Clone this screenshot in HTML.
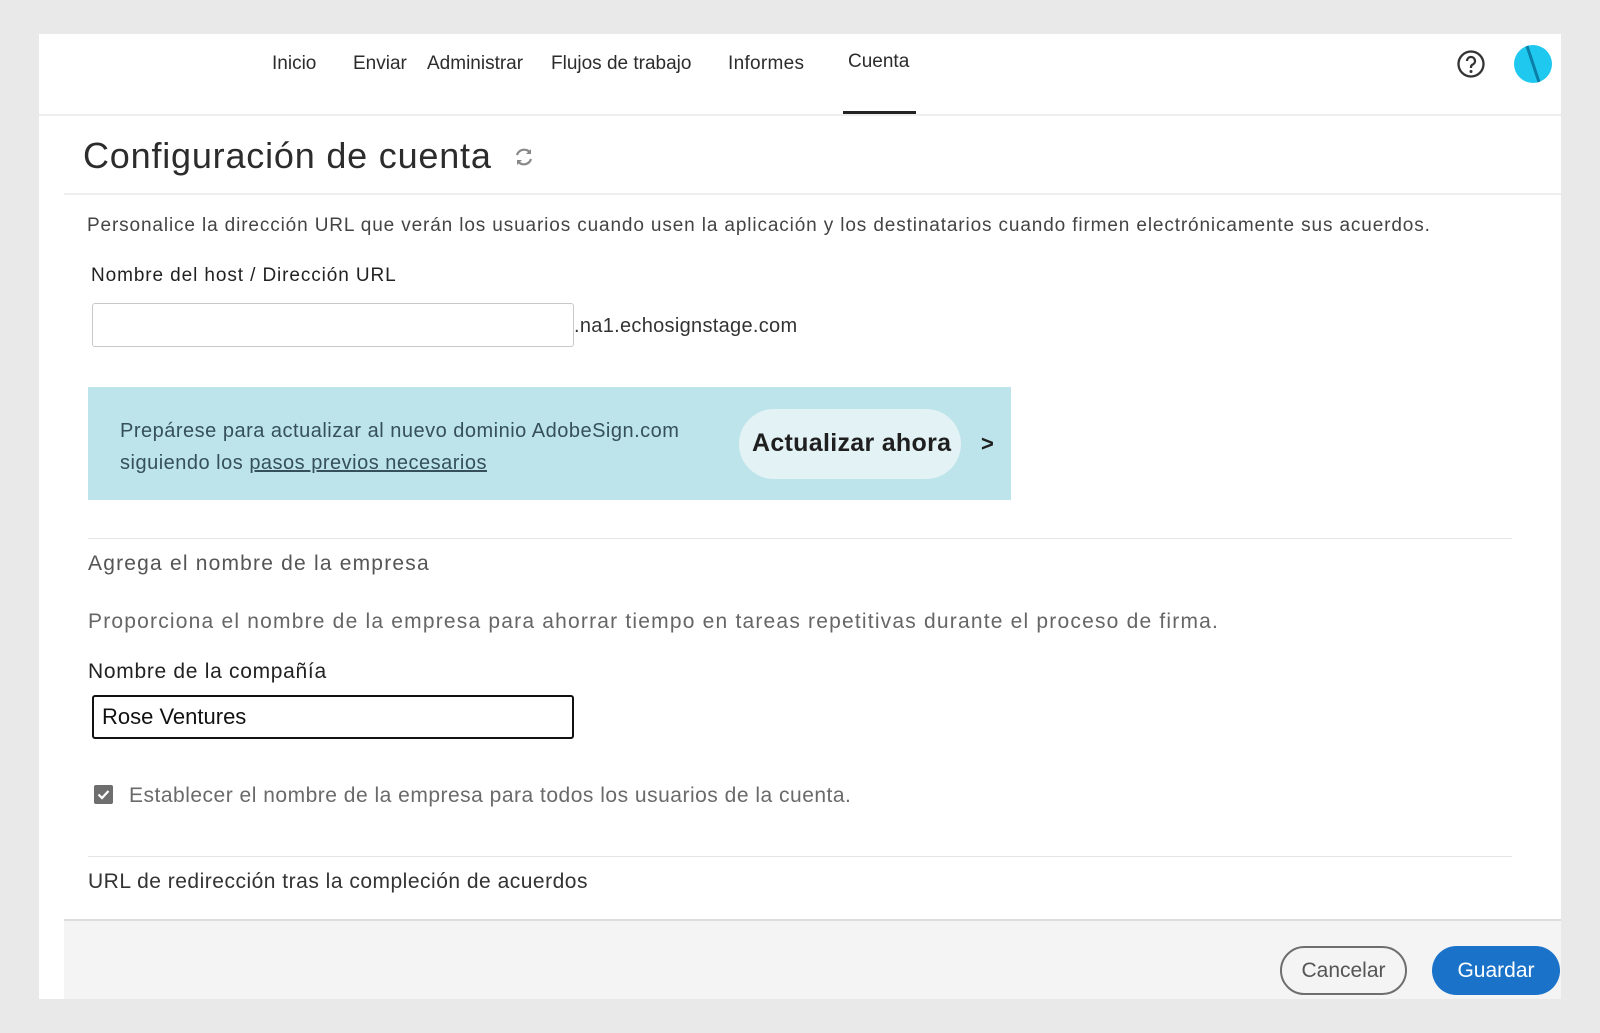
<!DOCTYPE html>
<html><head><meta charset="utf-8"><style>
*{margin:0;padding:0;box-sizing:border-box}
body{width:1600px;height:1033px;background:#e9e9e9;font-family:"Liberation Sans",sans-serif;position:relative;overflow:hidden}
.a{position:absolute;white-space:nowrap}
.card{position:absolute;left:39px;top:34px;width:1522px;height:965px;background:#fff}
.nav{font-size:19px;color:#2c2c2c;top:53px}
</style></head><body>
<div class="card"></div>
<div class="a nav" style="left:272px">Inicio</div>
<div class="a nav" style="left:353px">Enviar</div>
<div class="a nav" style="left:427px">Administrar</div>
<div class="a nav" style="left:551px">Flujos de trabajo</div>
<div class="a nav" style="left:728px;letter-spacing:0.3px">Informes</div>
<div class="a nav" style="left:848px;top:51px">Cuenta</div>
<div class="a" style="left:843px;top:111px;width:73px;height:3px;background:#222"></div>
<div class="a" style="left:39px;top:114px;width:1522px;height:2px;background:#eee"></div>
<svg class="a" style="left:1456px;top:49px" width="30" height="30" viewBox="0 0 30 30"><circle cx="15" cy="15" r="12.5" fill="none" stroke="#333" stroke-width="2.3"/><path d="M11 12a4 4 0 1 1 5.5 3.7c-1 .5-1.5 1.2-1.5 2.3v1" fill="none" stroke="#333" stroke-width="2.3"/><circle cx="15" cy="22.5" r="1.5" fill="#333"/></svg>
<svg class="a" style="left:1513px;top:44px" width="40" height="40" viewBox="0 0 40 40"><circle cx="20" cy="20" r="19" fill="#1ec8ef"/><path d="M14 2 L26 38" stroke="#0b7fa8" stroke-width="3"/></svg>
<div class="a" style="left:83px;top:135px;font-size:36px;color:#2c2c2c;letter-spacing:0.8px">Configuración de cuenta</div>
<svg class="a" style="left:512px;top:145px" width="24" height="24" viewBox="0 0 24 24"><path d="M5 10a7.5 7.5 0 0 1 13-2.5M19 14a7.5 7.5 0 0 1-13 2.5" fill="none" stroke="#888" stroke-width="2.2"/><path d="M19 4v5h-5z M5 20v-5h5z" fill="#888"/></svg>
<div class="a" style="left:64px;top:193px;width:1497px;height:2px;background:#eee"></div>
<div class="a" style="left:87px;top:215px;font-size:19px;color:#444;letter-spacing:0.87px">Personalice la dirección URL que verán los usuarios cuando usen la aplicación y los destinatarios cuando firmen electrónicamente sus acuerdos.</div>
<div class="a" style="left:91px;top:265px;font-size:19px;color:#222;letter-spacing:0.9px">Nombre del host / Dirección URL</div>
<div class="a" style="left:92px;top:303px;width:482px;height:44px;border:1px solid #c8c8c8;border-radius:3px"></div>
<div class="a" style="left:574px;top:315px;font-size:20px;color:#333;letter-spacing:0.3px">.na1.echosignstage.com</div>
<div class="a" style="left:88px;top:387px;width:923px;height:113px;background:#bde3eb"></div>
<div class="a" style="left:120px;top:415px;font-size:20px;color:#35505a;line-height:32px;letter-spacing:0.5px">Prepárese para actualizar al nuevo dominio AdobeSign.com<br>siguiendo los <u>pasos previos necesarios</u></div>
<div class="a" style="left:739px;top:409px;width:222px;height:70px;border-radius:35px;background:#e3f2f5"></div>
<div class="a" style="left:752px;top:429px;font-size:25px;font-weight:bold;color:#1f1f1f;letter-spacing:0.3px">Actualizar ahora</div>
<div class="a" style="left:981px;top:431px;font-size:22px;font-weight:bold;color:#1f1f1f">&gt;</div>
<div class="a" style="left:88px;top:538px;width:1424px;height:1px;background:#e6e6e6"></div>
<div class="a" style="left:88px;top:552px;font-size:21px;color:#555;letter-spacing:1.2px">Agrega el nombre de la empresa</div>
<div class="a" style="left:88px;top:610px;font-size:21px;color:#666;letter-spacing:1.2px">Proporciona el nombre de la empresa para ahorrar tiempo en tareas repetitivas durante el proceso de firma.</div>
<div class="a" style="left:88px;top:660px;font-size:21px;color:#222;letter-spacing:0.7px">Nombre de la compañía</div>
<div class="a" style="left:92px;top:695px;width:482px;height:44px;border:2px solid #111;border-radius:3px;font-size:22px;color:#111;padding:7px 0 0 8px">Rose Ventures</div>
<svg class="a" style="left:94px;top:785px" width="19" height="19" viewBox="0 0 19 19"><rect width="19" height="19" rx="2" fill="#6e6e6e"/><path d="M4.5 9.5l3.5 3.5 6.5-7" fill="none" stroke="#fff" stroke-width="2.2"/></svg>
<div class="a" style="left:129px;top:784px;font-size:21px;color:#6a6a6a;letter-spacing:0.5px">Establecer el nombre de la empresa para todos los usuarios de la cuenta.</div>
<div class="a" style="left:88px;top:856px;width:1424px;height:1px;background:#e6e6e6"></div>
<div class="a" style="left:88px;top:870px;font-size:21px;color:#333;letter-spacing:0.5px">URL de redirección tras la compleción de acuerdos</div>
<div class="a" style="left:64px;top:919px;width:1497px;height:80px;background:#f4f4f4;border-top:2px solid #ddd"></div>
<div class="a" style="left:1280px;top:946px;width:127px;height:49px;border:2px solid #6e6e6e;border-radius:25px;font-size:21px;color:#555;text-align:center;line-height:45px">Cancelar</div>
<div class="a" style="left:1432px;top:946px;width:128px;height:49px;background:#1b73c9;border-radius:25px;font-size:21px;color:#fff;text-align:center;line-height:49px">Guardar</div>
</body></html>
